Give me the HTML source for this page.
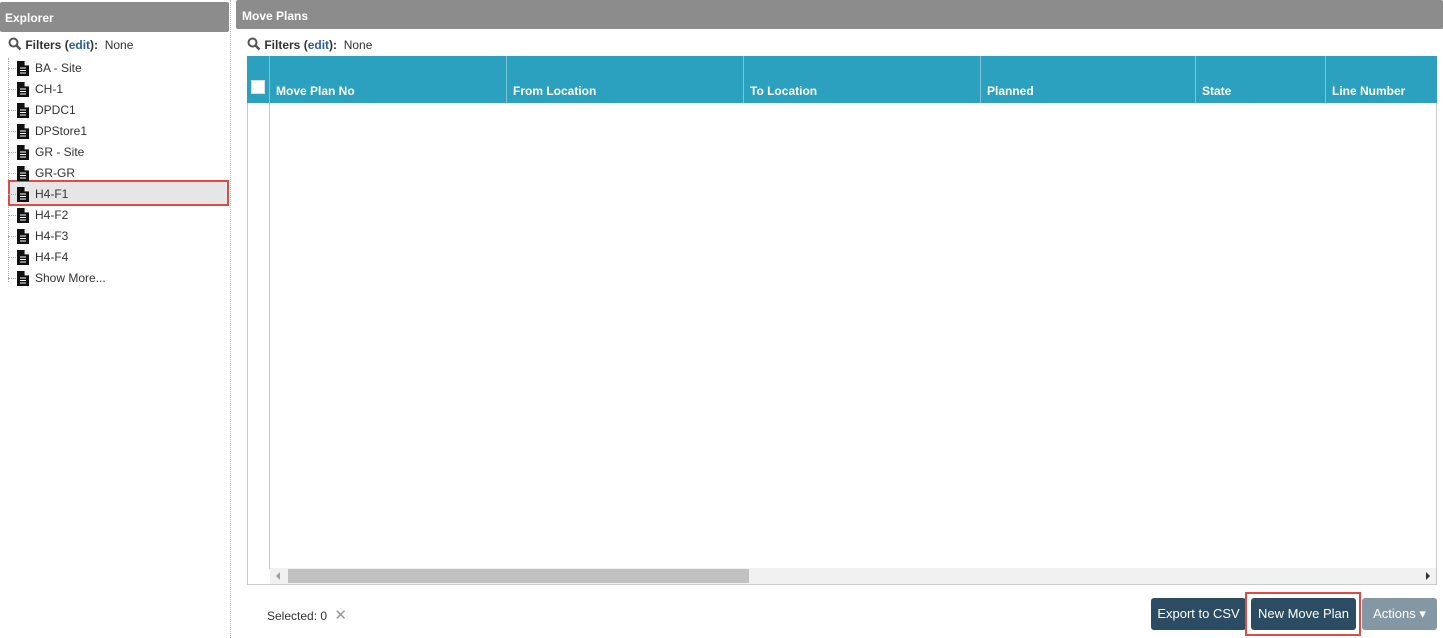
<!DOCTYPE html>
<html><head><style>
*{box-sizing:border-box;margin:0;padding:0}
body{width:1443px;height:638px;background:#fff;font-family:"Liberation Sans",sans-serif;font-size:12px;color:#333;position:relative;overflow:hidden}
.abs{position:absolute}
.hdr{background:#8c8c8c;color:#fff;font-weight:bold;font-size:12px;border-radius:2px}
.item{position:absolute;left:17px;height:20px;line-height:20px;font-size:12px;color:#333}
.item svg{position:absolute;left:0;top:3px}
.item span{position:absolute;left:18px;white-space:nowrap}
.dot{position:absolute;left:8px;border-top:1px dotted #aaa;width:8px}
.th{position:absolute;top:56px;height:47px;color:#fff;font-weight:bold;font-size:12px;padding:28px 0 0 6px;border-left:1px solid #7cc4d8}
.btn{position:absolute;top:598px;height:32px;line-height:32px;color:#fff;font-size:13px;text-align:center;border-radius:3px}
</style></head><body>
<div class="abs hdr" style="left:0;top:2px;width:229px;height:30px;line-height:32px;padding-left:5px">Explorer</div>
<div class="abs" style="left:230px;top:0;height:638px;border-left:1px dotted #bbb"></div>
<div class="abs" style="left:8px;top:37px;font-size:12px"><svg width="14" height="14" viewBox="0 0 14 14" style="vertical-align:-2px"><circle cx="5.5" cy="5.5" r="4" fill="none" stroke="#555" stroke-width="2"/><path d="M8.5 8.5 L12.5 12.5" stroke="#555" stroke-width="2.5"/></svg> <b>Filters (<span style="color:#2a5db0">edit</span>):</b>&nbsp; None</div>
<div class="abs" style="left:8px;top:58px;height:224px;border-left:1px dotted #aaa"></div>
<div class="abs" style="left:8px;top:180px;width:221px;height:26px;background:#e6e6e6;border:2px solid #e04a43"></div>
<div id="tree"></div>
<script>
var n=["BA - Site","CH-1","DPDC1","DPStore1","GR - Site","GR-GR","H4-F1","H4-F2","H4-F3","H4-F4","Show More..."];
var h="";n.forEach(function(t,i){var y=58+i*21;h+='<div class="dot" style="top:'+(y+10)+'px"></div><div class="item" style="top:'+y+'px"><svg width="12" height="15" viewBox="0 0 12 15"><path d="M0 0H8L12 4V15H0Z" fill="#111"/><path d="M8 0V4H12" fill="#fff" stroke="#fff" stroke-width=".8"/><path d="M3 7H9M3 9.5H9M3 12H9" stroke="#fff" stroke-width="1"/></svg><span>'+t+'</span></div>'});
document.getElementById("tree").innerHTML=h;
</script>
<div class="abs hdr" style="left:236px;top:0;width:1207px;height:29px;line-height:32px;padding-left:6px">Move Plans</div>
<div class="abs" style="left:247px;top:37px;font-size:12px"><svg width="14" height="14" viewBox="0 0 14 14" style="vertical-align:-2px"><circle cx="5.5" cy="5.5" r="4" fill="none" stroke="#555" stroke-width="2"/><path d="M8.5 8.5 L12.5 12.5" stroke="#555" stroke-width="2.5"/></svg> <b>Filters (<span style="color:#2a5db0">edit</span>):</b>&nbsp; None</div>
<div class="abs" style="left:247px;top:56px;width:1190px;height:529px;border:1px solid #ccc;border-top:none"></div>
<div class="abs" style="left:247px;top:56px;width:1190px;height:47px;background:#2ba0bf"></div>
<div class="abs" style="left:251px;top:80px;width:14px;height:14px;background:#fff;border:1px solid #ddd"></div>
<div class="abs" style="left:269px;top:103px;height:466px;border-left:1px solid #ccc"></div>
<div class="th" style="left:269px">Move Plan No</div>
<div class="th" style="left:506px">From Location</div>
<div class="th" style="left:743px">To Location</div>
<div class="th" style="left:980px">Planned</div>
<div class="th" style="left:1195px">State</div>
<div class="th" style="left:1325px">Line Number</div>
<div class="abs" style="left:270px;top:568px;width:1166px;height:16px;background:#f1f1f1"></div>
<div class="abs" style="left:288px;top:569px;width:461px;height:14px;background:#c1c1c1"></div>
<div class="abs" style="left:276px;top:572px;width:0;height:0;border:4px solid transparent;border-right-color:#a0a0a0;border-left:none"></div>
<div class="abs" style="left:1426px;top:572px;width:0;height:0;border:4px solid transparent;border-left-color:#333;border-right:none"></div>
<div class="abs" style="left:267px;top:606px;font-size:12px;color:#333">Selected: 0 <span style="color:#999;font-size:15px;margin-left:4px">✕</span></div>
<div class="btn" style="left:1151px;width:95px;background:#2b4c63">Export to CSV</div>
<div class="abs" style="left:1245px;top:592px;width:116px;height:44px;border:2px solid #e04a43"></div>
<div class="btn" style="left:1251px;width:105px;background:#2b4c63">New Move Plan</div>
<div class="btn" style="left:1362px;width:75px;background:#8497a4">Actions ▾</div>
</body></html>
